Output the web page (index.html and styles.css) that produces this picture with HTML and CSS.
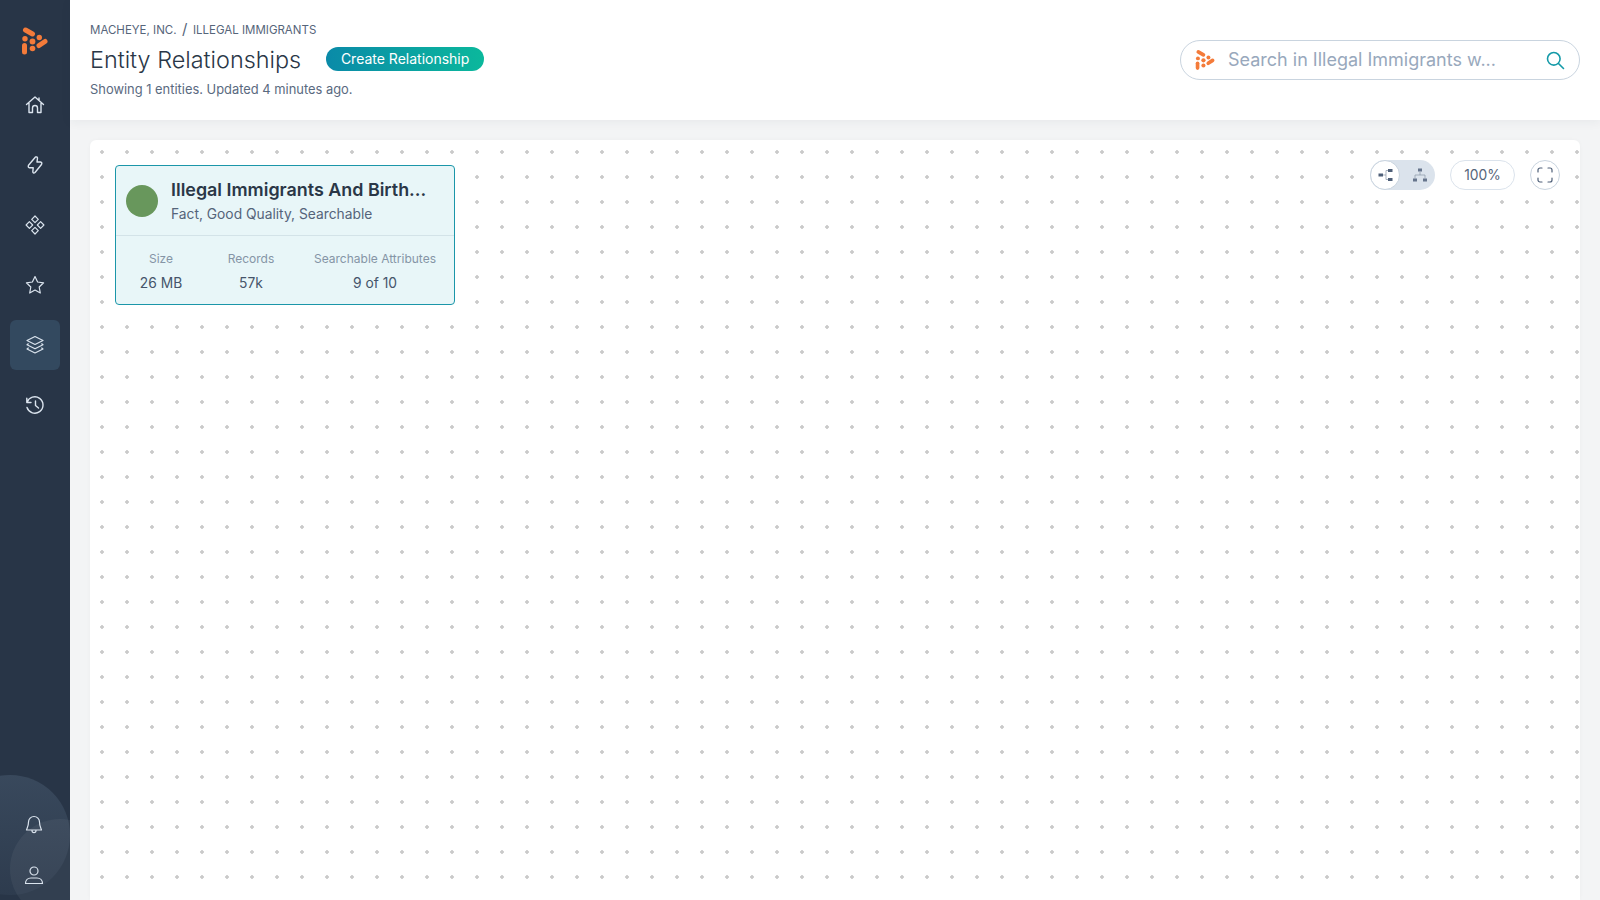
FILE: index.html
```html
<!DOCTYPE html>
<html lang="en">
<head>
<meta charset="utf-8">
<title>Entity Relationships</title>
<link rel="stylesheet" href="styles.css">
</head>
<body>
<div class="app">
  <aside class="sidebar">
    <span class="deco deco-a"></span>
    <span class="deco deco-b"></span>
    <div class="brand">
      <svg width="30" height="30" viewBox="0 0 30 30" class="logo"><g stroke="#f47b3a" stroke-linecap="round" fill="none" stroke-width="5"><path d="M4.500 4 11.500 8"/><path d="M3.500 19.500V26"/><path d="M18 19.500 24 15.500"/></g><g fill="#f47b3a"><circle cx="4" cy="12.800" r="2.700"/><circle cx="11.500" cy="15.500" r="2.900"/><circle cx="18.300" cy="11.500" r="2.700"/><circle cx="11.500" cy="22.500" r="2.800"/></g></svg>
    </div>
    <nav class="nav">
      <a class="nav-item"><svg viewBox="0 0 20 20" class="ico"><path d="M1.500 9.500 10 2l8.500 7.500M4 8v9.500h3.500V13a2.500 2.500 0 0 1 5 0v4.500H16V8M14 3v2.500"/></svg></a>
      <a class="nav-item"><svg viewBox="0 0 20 20" class="ico"><path d="M10.500 2Q12 1.500 12.500 3L12 7H15.500Q17.500 7.500 16.500 9.500L10 17.500Q8.500 18.800 7.800 17L8.200 12.800H4.500Q2.700 12.300 3.500 10.300Z"/></svg></a>
      <a class="nav-item"><svg viewBox="0 0 20 20" class="ico ico-mid"><path d="m10 1 3.300 3.300L10 7.600 6.700 4.300ZM4.400 6.700 7.700 10l-3.300 3.300L1.100 10ZM15.600 6.700l3.300 3.300-3.300 3.300-3.300-3.300ZM10 12.400l3.300 3.300L10 19l-3.300-3.300Z"/></svg></a>
      <a class="nav-item"><svg viewBox="0 0 20 20" class="ico ico-mid"><path d="m10 1.500 2.600 5.500 6 .8-4.400 4.200 1.100 6L10 15l-5.300 3 1.100-6-4.400-4.200 6-.8Z"/></svg></a>
      <a class="nav-item is-active"><svg viewBox="0 0 20 20" class="ico ico-mid"><path d="m10 1.500 8 4-8 4-8-4ZM3.300 8.800 2 9.800l8 4 8-4-1.300-1M3.300 13 2 14l8 4 8-4-1.300-1"/></svg></a>
      <a class="nav-item"><svg viewBox="0 0 20 20" class="ico"><path d="M1.800 3.200V7.500h4.200M2 7.500A8.200 8.200 0 1 1 2 12.500M10.500 6V10.500l3 2.500"/></svg></a>
    </nav>
    <div class="nav-bottom">
      <a class="nav-foot"><svg viewBox="0 0 20 20" class="ico ico-thin"><path d="M10 1.500a5.500 5.500 0 0 0-5.500 5.500c0 5-1.800 6.500-2 8h15c-.2-1.500-2-3-2-8A5.500 5.500 0 0 0 10 1.500ZM8 15.500a2 2.200 0 0 0 4 0"/></svg></a>
      <a class="nav-foot"><svg viewBox="0 0 20 20" class="ico ico-thin"><circle cx="10" cy="6" r="4"/><path d="M1.500 18.500c0-3.500 2.500-5.500 5.500-5.500h6c3 0 5.500 2 5.500 5.500Z"/></svg></a>
    </div>
  </aside>
  <main class="main">
    <header class="topbar">
      <div class="heading">
        <div class="crumbs"><span>MACHEYE, INC.</span><span class="slash">/</span><span>ILLEGAL IMMIGRANTS</span></div>
        <div class="title-row">
          <h1 class="title">Entity Relationships</h1>
          <button class="create">Create Relationship</button>
        </div>
        <p class="status">Showing 1 entities. Updated 4 minutes ago.</p>
      </div>
      <div class="search">
        <svg width="22" height="22" viewBox="0 0 30 30" class="search-logo"><g stroke="#f47b3a" stroke-linecap="round" fill="none" stroke-width="5"><path d="M4.500 4 11.500 8"/><path d="M3.500 19.500V26"/><path d="M18 19.500 24 15.500"/></g><g fill="#f47b3a"><circle cx="4" cy="12.800" r="2.700"/><circle cx="11.500" cy="15.500" r="2.900"/><circle cx="18.300" cy="11.500" r="2.700"/><circle cx="11.500" cy="22.500" r="2.800"/></g></svg>
        <span class="search-text">Search in Illegal Immigrants w...</span>
        <svg width="20" height="20" viewBox="0 0 20 20" class="search-ico"><circle cx="8.800" cy="8.800" r="6.300"/><path d="m13.500 13.500 5 5"/></svg>
      </div>
    </header>
    <section class="canvas">
      <article class="node">
        <div class="node-head">
          <span class="node-dot"></span>
          <div class="node-text">
            <div class="node-title">Illegal Immigrants And Birth...</div>
            <div class="node-sub">Fact, Good Quality, Searchable</div>
          </div>
        </div>
        <div class="node-stats">
          <div class="stat stat-size"><div class="stat-label">Size</div><div class="stat-value">26 MB</div></div>
          <div class="stat stat-records"><div class="stat-label">Records</div><div class="stat-value">57k</div></div>
          <div class="stat stat-attrs"><div class="stat-label">Searchable Attributes</div><div class="stat-value">9 of 10</div></div>
        </div>
      </article>
      <div class="controls">
        <div class="toggle">
          <span class="toggle-opt is-on"><svg width="15" height="14" viewBox="0 0 15 14" class="tree"><path d="M5 7h3M8 2.500h2M8 11.500h2M8 2.500v9"/><rect x="0.500" y="5.500" width="4.500" height="3"/><rect x="10" y="1" width="4.500" height="3"/><rect x="10" y="10" width="4.500" height="3"/></svg></span>
          <span class="toggle-opt"><svg width="16" height="14" viewBox="0 0 16 14" class="tree tree-off"><path d="M8 4v3M3 7h10M3 7v3.500M13 7v3.500"/><rect x="6" y="0.500" width="4" height="3"/><rect x="1" y="10.500" width="4" height="3"/><rect x="11" y="10.500" width="4" height="3"/></svg></span>
        </div>
        <div class="zoom-pill">100%</div>
        <div class="full"><svg width="16" height="16" viewBox="0 0 16 16" class="full-ico"><path d="M1 5V3a2 2 0 0 1 2-2h2M11 1h2a2 2 0 0 1 2 2v2M15 11v2a2 2 0 0 1-2 2h-2M5 15H3a2 2 0 0 1-2-2v-2"/></svg></div>
      </div>
    </section>
  </main>
</div>
</body>
</html>
```
FILE: styles.css
```css
* { box-sizing: border-box; }
html, body { margin: 0; height: 100%; overflow: hidden; }
body { font-family: "Inter", "Liberation Sans", sans-serif; color: #2a3747; background: #f3f4f5; }
.app { display: flex; height: 900px; }

.sidebar { position: relative; width: 70px; flex: none; background: #283547; display: flex; flex-direction: column; overflow: hidden; }
.deco { position: absolute; border-radius: 50%; background: rgba(255,255,255,.05); }
.deco-a { left: -50px; top: 775px; width: 120px; height: 120px; background: linear-gradient(180deg, rgba(110,135,160,.24), rgba(110,135,160,.08)); }
.deco-b { left: 10px; top: 819px; width: 100px; height: 100px; }
.brand { height: 75px; display: flex; justify-content: center; padding-top: 26px; padding-left: 2px; position: relative; }
.nav { display: flex; flex-direction: column; position: relative; }
.nav-item { height: 50px; width: 50px; margin: 5px 10px; display: flex; align-items: center; justify-content: center; border-radius: 6px; }
.nav-item.is-active { background: #33495f; }
.ico { width: 20px; height: 20px; fill: none; stroke: #dbe4ee; stroke-width: 1.4; stroke-linejoin: round; stroke-linecap: round; }
.ico-mid { stroke-width: 1.200; }
.ico-thin { stroke-width: 1.200; }
.nav-bottom { margin-top: auto; position: relative; display: flex; flex-direction: column; align-items: center; padding-right: 2px; }
.nav-foot { height: 50px; display: flex; align-items: center; justify-content: center; }

.main { flex: 1; min-width: 0; display: flex; flex-direction: column; }
.topbar { height: 120px; flex: none; background: #fff; display: flex; justify-content: space-between; padding: 20px 20px 0; box-shadow: 0 2px 10px rgba(40,50,60,.06); position: relative; }
.crumbs { display: flex; align-items: center; gap: 5.500px; font-size: 11.500px; line-height: 18px; color: #56657a; margin-top: 1px; }
.slash { font-size: 15px; margin-top: -2px; }
.title-row { display: flex; align-items: center; gap: 25px; height: 38px; margin-top: 1px; }
.title { margin: 1px 0 0; font-size: 23.400px; font-weight: 300; color: #2a3747; line-height: 38px; }
.create { height: 24px; width: 158px; padding: 0 0 1px; border: 0; border-radius: 12px; color: #fff; font: 14px "Inter", sans-serif; background: linear-gradient(90deg, #0a8aa8, #0bb89c); }
.status { margin: 2px 0 0; font-size: 12.900px; font-weight: 400; line-height: 20px; color: #5a6a7f; }
.search { width: 400px; height: 40px; margin-top: 20px; display: flex; align-items: center; padding: 0 15px 0 14px; border: 1px solid #c9d4df; border-radius: 20px; }
.search-text { flex: 1; margin-left: 11px; font-size: 18px; color: #98a8bc; margin-top: -1px; }
.search-ico { fill: none; stroke: #149aa8; stroke-width: 1.600; stroke-linecap: round; margin-right: -1px; }

.canvas { position: relative; flex: 1; margin: 20px 20px 0; background-color: #fff; background-image: radial-gradient(circle at 12px 12px, #cacaca 1.5px, transparent 2px); background-size: 25px 25px; border-radius: 6px 6px 0 0; box-shadow: 0 0 4px rgba(40,50,60,.03); }
.node { position: absolute; left: 25px; top: 25px; width: 340px; height: 140px; background: #e8f6f8; border: 1px solid #1b96a9; border-radius: 4px; }
.node-head { height: 70px; display: flex; align-items: center; padding: 0 10px; gap: 13px; border-bottom: 1px solid #d3e3e8; }
.node-dot { width: 32px; height: 32px; border-radius: 50%; background: #68975c; flex: none; }
.node-text { padding-top: 1px; }
.node-title { font-size: 17.900px; font-weight: 600; color: #2a3747; line-height: 24px; }
.node-sub { font-size: 13.800px; color: #55647a; line-height: 20px; margin-top: 2px; }
.node-stats { display: flex; padding-top: 14px; }
.stat { text-align: center; }
.stat-size { width: 90px; }
.stat-records { width: 90px; }
.stat-attrs { width: 158px; }
.stat-label { font-size: 12px; line-height: 18px; color: #8595a6; }
.stat-value { font-size: 13.800px; line-height: 20px; margin-top: 5px; color: #45546a; }

.controls { position: absolute; right: 15px; top: 20px; display: flex; align-items: center; gap: 15px; padding: 0 5px; background: #fff; }
.toggle { display: flex; width: 65px; height: 30px; border-radius: 15px; background: #dbe3ec; }
.toggle-opt { flex: none; width: 30px; height: 30px; border-radius: 50%; display: flex; align-items: center; justify-content: center; }
.toggle-opt + .toggle-opt { margin-left: 5px; }
.toggle-opt.is-on { background: #fff; border: 1px solid #c9d4df; }
.tree { fill: #4e5f78; stroke: none; }
.tree path { fill: none; stroke: #8996a8; stroke-width: .7; }
.tree-off { fill: #66758c; }
.zoom-pill { width: 65px; height: 30px; border: 1px solid #dbe3ec; border-radius: 15px; text-align: center; line-height: 28px; font-size: 13.800px; color: #56657a; }
.full { width: 30px; height: 30px; border: 1px solid #c9d4df; border-radius: 50%; display: flex; align-items: center; justify-content: center; }
.full-ico { fill: none; stroke: #4e5f78; stroke-width: 1.200; stroke-linecap: round; }
```
